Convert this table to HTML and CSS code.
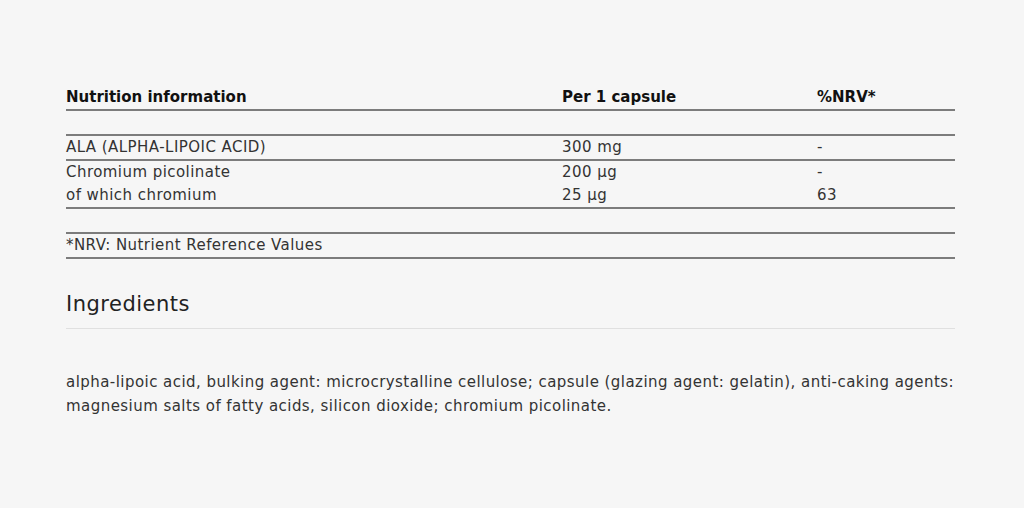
FILE: index.html
```html
<!DOCTYPE html>
<html lang="en">
<head>
<meta charset="utf-8">
<title>Nutrition information</title>
<link rel="stylesheet" href="styles.css">
</head>
<body>
<main class="page">
  <div class="nutrition">
    <div class="row head">
      <div class="c1">Nutrition information</div>
      <div class="c2">Per 1 capsule</div>
      <div class="c3">%NRV*</div>
    </div>
    <div class="row empty"></div>
    <div class="row">
      <div class="c1">ALA (ALPHA-LIPOIC ACID)</div>
      <div class="c2">300 mg</div>
      <div class="c3">-</div>
    </div>
    <div class="row">
      <div class="c1">Chromium picolinate<br>of which chromium</div>
      <div class="c2">200 µg<br>25 µg</div>
      <div class="c3">-<br>63</div>
    </div>
    <div class="row empty"></div>
    <div class="row">
      <div class="c1">*NRV: Nutrient Reference Values</div>
    </div>
  </div>
  <h2 class="ing-title">Ingredients</h2>
  <p class="ing-text">alpha-lipoic acid, bulking agent: microcrystalline cellulose; capsule (glazing agent: gelatin), anti-caking agents: magnesium salts of fatty acids, silicon dioxide; chromium picolinate.</p>
</main>
</body>
</html>
```

FILE: styles.css
```css
html, body {
  margin: 0;
  padding: 0;
  background: #f6f6f6;
}
body {
  font-family: "DejaVu Sans", "Liberation Sans", sans-serif;
  color: #333333;
  font-size: 15px;
  letter-spacing: 0.45px;
}
.page {
  width: 889px;
  padding: 86px 0 0 66px;
}
.row {
  display: flex;
  line-height: 23px;
  min-height: 23px;
  border-bottom: 2px solid #7c7c7c;
}
.row.head {
  font-weight: 700;
  color: #111111;
  letter-spacing: 0;
}
.c1 { width: 496px; }
.c2 { width: 255px; }
.c3 { flex: 1; }
.ing-title {
  margin: 30px 0 0;
  font-size: 21px;
  font-weight: 400;
  color: #222222;
  letter-spacing: 0.5px;
  line-height: 30px;
  padding-bottom: 9px;
  border-bottom: 1px solid #e0e0e0;
}
.ing-text {
  margin: 41px 0 0;
  line-height: 24px;
}
```
